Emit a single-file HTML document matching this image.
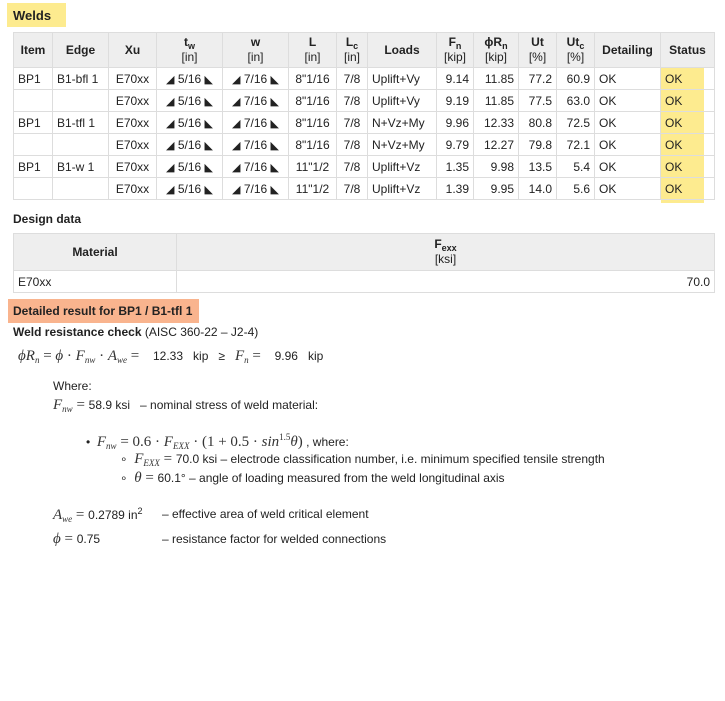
<!DOCTYPE html>
<html><head><meta charset="utf-8"><style>
body{margin:0;width:725px;height:701px;background:#fff;font-family:"Liberation Sans",Arial,sans-serif;font-size:12px;color:#222;position:relative;overflow:hidden}
.a{position:absolute;white-space:nowrap}
table{border-collapse:collapse;position:absolute;table-layout:fixed}
td,th{border:1px solid #ddd;padding:0 4px;font-size:12px;white-space:nowrap}
th{background:#eee;font-weight:bold;text-align:center;line-height:15px}
th .u{font-weight:normal}
tr.r td{height:21px}
.c{text-align:center}.rt{text-align:right}
sub{font-size:9px;vertical-align:-3px;line-height:0}
.m{font-family:"Liberation Serif",serif;font-style:italic;font-size:15px;color:#333}
.mn{font-family:"Liberation Serif",serif;font-size:15px;color:#333}
.tri{font-size:11px}
</style></head><body>
<div class="a" style="left:7px;top:3px;width:59px;height:24px;background:#fdeb8f"></div>
<div class="a" style="left:13px;top:8px;font-size:13px;font-weight:bold">Welds</div>
<div class="a" style="left:661px;top:67px;width:43px;height:136px;background:#fdeb8f"></div>
<table style="left:13px;top:32px;width:701px">
<colgroup><col style="width:39px"><col style="width:56px"><col style="width:48px"><col style="width:66px"><col style="width:66px"><col style="width:48px"><col style="width:31px"><col style="width:69px"><col style="width:37px"><col style="width:45px"><col style="width:38px"><col style="width:38px"><col style="width:66px"><col style="width:54px"></colgroup>
<tr style="height:35px"><th>Item</th><th>Edge</th><th>Xu</th><th>t<sub>w</sub><br><span class="u">[in]</span></th><th>w<br><span class="u">[in]</span></th><th>L<br><span class="u">[in]</span></th><th>L<sub>c</sub><br><span class="u">[in]</span></th><th>Loads</th><th>F<sub>n</sub><br><span class="u">[kip]</span></th><th>ϕR<sub>n</sub><br><span class="u">[kip]</span></th><th>Ut<br><span class="u">[%]</span></th><th>Ut<sub>c</sub><br><span class="u">[%]</span></th><th>Detailing</th><th style="background:#eee">Status</th></tr>
<tr class="r"><td>BP1</td><td>B1-bfl 1</td><td class="c">E70xx</td><td class="c"><span class="tri">◢</span> 5/16 <span class="tri">◣</span></td><td class="c"><span class="tri">◢</span> 7/16 <span class="tri">◣</span></td><td class="c">8"1/16</td><td class="c">7/8</td><td>Uplift+Vy</td><td class="rt">9.14</td><td class="rt">11.85</td><td class="rt">77.2</td><td class="rt">60.9</td><td>OK</td><td>OK</td></tr>
<tr class="r"><td></td><td></td><td class="c">E70xx</td><td class="c"><span class="tri">◢</span> 5/16 <span class="tri">◣</span></td><td class="c"><span class="tri">◢</span> 7/16 <span class="tri">◣</span></td><td class="c">8"1/16</td><td class="c">7/8</td><td>Uplift+Vy</td><td class="rt">9.19</td><td class="rt">11.85</td><td class="rt">77.5</td><td class="rt">63.0</td><td>OK</td><td>OK</td></tr>
<tr class="r"><td>BP1</td><td>B1-tfl 1</td><td class="c">E70xx</td><td class="c"><span class="tri">◢</span> 5/16 <span class="tri">◣</span></td><td class="c"><span class="tri">◢</span> 7/16 <span class="tri">◣</span></td><td class="c">8"1/16</td><td class="c">7/8</td><td>N+Vz+My</td><td class="rt">9.96</td><td class="rt">12.33</td><td class="rt">80.8</td><td class="rt">72.5</td><td>OK</td><td>OK</td></tr>
<tr class="r"><td></td><td></td><td class="c">E70xx</td><td class="c"><span class="tri">◢</span> 5/16 <span class="tri">◣</span></td><td class="c"><span class="tri">◢</span> 7/16 <span class="tri">◣</span></td><td class="c">8"1/16</td><td class="c">7/8</td><td>N+Vz+My</td><td class="rt">9.79</td><td class="rt">12.27</td><td class="rt">79.8</td><td class="rt">72.1</td><td>OK</td><td>OK</td></tr>
<tr class="r"><td>BP1</td><td>B1-w 1</td><td class="c">E70xx</td><td class="c"><span class="tri">◢</span> 5/16 <span class="tri">◣</span></td><td class="c"><span class="tri">◢</span> 7/16 <span class="tri">◣</span></td><td class="c">11"1/2</td><td class="c">7/8</td><td>Uplift+Vz</td><td class="rt">1.35</td><td class="rt">9.98</td><td class="rt">13.5</td><td class="rt">5.4</td><td>OK</td><td>OK</td></tr>
<tr class="r"><td></td><td></td><td class="c">E70xx</td><td class="c"><span class="tri">◢</span> 5/16 <span class="tri">◣</span></td><td class="c"><span class="tri">◢</span> 7/16 <span class="tri">◣</span></td><td class="c">11"1/2</td><td class="c">7/8</td><td>Uplift+Vz</td><td class="rt">1.39</td><td class="rt">9.95</td><td class="rt">14.0</td><td class="rt">5.6</td><td>OK</td><td>OK</td></tr>
</table>
<div class="a" style="left:13px;top:212px;font-weight:bold">Design data</div>
<table style="left:13px;top:233px;width:701px">
<colgroup><col style="width:163px"><col style="width:538px"></colgroup>
<tr style="height:37px"><th>Material</th><th>F<sub>exx</sub><br><span class="u">[ksi]</span></th></tr>
<tr class="r"><td>E70xx</td><td class="rt">70.0</td></tr>
</table>
<div class="a" style="left:8px;top:299px;width:191px;height:24px;background:#f9b48e"></div>
<div class="a" style="left:13px;top:304px;font-weight:bold">Detailed result for BP1 / B1-tfl 1</div>
<div class="a" style="left:13px;top:325px"><b>Weld resistance check</b> (AISC 360-22 – J2-4)</div>
<div class="a" style="left:18px;top:348px"><span class="m">ϕR<sub>n</sub></span><span class="mn"> = </span><span class="m">ϕ</span><span class="mn"> · </span><span class="m">F<sub>nw</sub></span><span class="mn"> · </span><span class="m">A<sub>we</sub></span><span class="mn"> = </span>&nbsp;&nbsp; 12.33 &nbsp; kip &nbsp; ≥ &nbsp; <span class="m">F<sub>n</sub></span><span class="mn"> = </span>&nbsp;&nbsp; 9.96 &nbsp; kip</div>
<div class="a" style="left:53px;top:379px">Where:</div>
<div class="a" style="left:53px;top:397px"><span class="m">F<sub>nw</sub></span><span class="mn"> = </span>58.9 ksi &nbsp; – nominal stress of weld material:</div>
<div class="a" style="left:86px;top:432px">•&nbsp; <span class="m">F<sub>nw</sub></span><span class="mn"> = 0.6 · </span><span class="m">F<sub>EXX</sub></span><span class="mn"> · (1 + 0.5 · </span><span class="m">sin</span><span class="mn"><sup style="font-size:9px">1.5</sup></span><span class="m">θ</span><span class="mn">)</span> , where:</div>
<div class="a" style="left:120px;top:451px">∘&nbsp; <span class="m">F<sub>EXX</sub></span><span class="mn"> = </span> 70.0 ksi – electrode classification number, i.e. minimum specified tensile strength</div>
<div class="a" style="left:120px;top:470px">∘&nbsp; <span class="m">θ</span><span class="mn"> = </span> 60.1° – angle of loading measured from the weld longitudinal axis</div>
<div class="a" style="left:53px;top:506px"><span class="m">A<sub>we</sub></span><span class="mn"> = </span>0.2789 in<sup style="font-size:9px">2</sup></div>
<div class="a" style="left:162px;top:507px">– effective area of weld critical element</div>
<div class="a" style="left:53px;top:531px"><span class="m">ϕ</span><span class="mn"> = </span>0.75</div>
<div class="a" style="left:162px;top:532px">– resistance factor for welded connections</div>
</body></html>
